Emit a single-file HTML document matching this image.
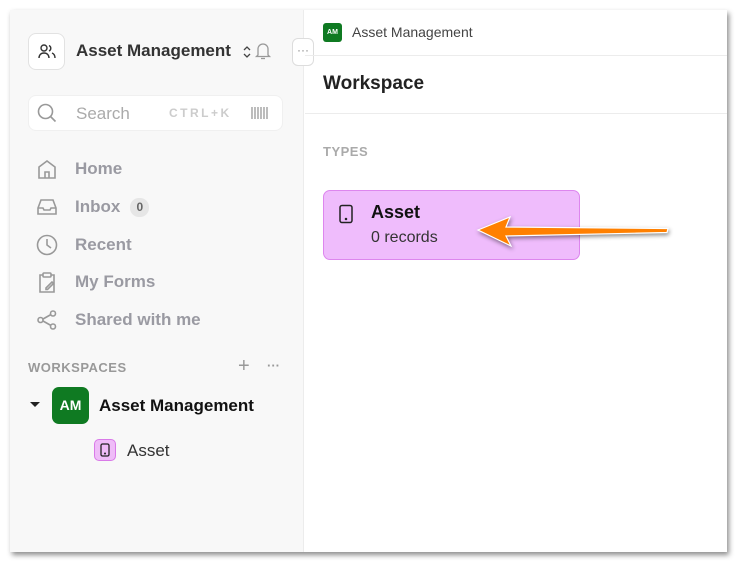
<!DOCTYPE html>
<html><head><meta charset="utf-8"><style>
*{box-sizing:border-box;margin:0;padding:0}
body{width:738px;height:564px;background:#fff;font-family:"Liberation Sans",sans-serif;position:relative;overflow:hidden}
.frame{position:absolute;left:10px;top:10px;width:717px;height:542px;background:#fff;box-shadow:2px 3px 5px rgba(0,0,0,.45);overflow:hidden}
.side{position:absolute;left:0;top:0;width:294px;height:100%;background:#f8f8f8;border-right:1px solid #ececec}
.abs{position:absolute}
.nav{position:absolute;left:26px;display:flex;align-items:center;font-size:17px;font-weight:bold;color:#9a9aa2}
.nav svg{width:22px;height:22px;margin-right:17px}
</style></head><body>
<div class="frame">
<div class="side">
  <div class="abs" style="left:18px;top:23px;width:37px;height:37px;border:1px solid #e2e2e2;border-radius:8px;background:#fff"></div>
  <svg class="abs" style="left:27px;top:32px" width="20" height="20" viewBox="0 0 20 20" fill="none" stroke="#333" stroke-width="1.4"><circle cx="7" cy="6" r="3"/><path d="M2 16c0-3 2-5 5-5s5 2 5 5"/><path d="M12 3.5a3 3 0 0 1 0 5.5M15 11c2 .8 3 2.5 3 5"/></svg>
  <div class="abs" style="left:66px;top:31px;font-size:17px;font-weight:bold;color:#333">Asset Management</div>
  <svg class="abs" style="left:232px;top:35px" width="10" height="14" viewBox="0 0 10 14" fill="none" stroke="#444" stroke-width="1.3"><path d="M2 5l3-3 3 3M2 9l3 3 3-3"/></svg>
  <svg class="abs" style="left:244px;top:31px" width="18" height="20" viewBox="0 0 18 20" fill="none" stroke="#999" stroke-width="1.3"><path d="M4 14V8a5 5 0 0 1 10 0v6l1.5 1.5h-13z"/><path d="M7 17.5h4"/></svg>
  <div class="abs" style="left:282px;top:28px;width:22px;height:28px;border:1px solid #ddd;border-radius:6px;background:#fff;font-size:12px;color:#888;text-align:center;line-height:22px">···</div>
  <div class="abs" style="left:18px;top:85px;width:255px;height:36px;background:#fff;border-radius:8px;border:1px solid #f0f0f0"></div>
  <svg class="abs" style="left:26px;top:92px" width="22" height="22" viewBox="0 0 22 22" fill="none" stroke="#999" stroke-width="1.6"><circle cx="9.5" cy="9.5" r="7"/><path d="M14.5 14.5l5 5"/></svg>
  <div class="abs" style="left:66px;top:94px;font-size:17px;color:#aaa">Search</div>
  <div class="abs" style="left:159px;top:96px;font-size:12px;font-weight:bold;color:#ccc;letter-spacing:2.5px">CTRL+K</div>
  <svg class="abs" style="left:240px;top:96px" width="18" height="14" viewBox="0 0 18 14" stroke="#999" stroke-width="1.3"><path d="M2 1v12M5 1v12M8 1v12M11 1v12M14 1v12M17 1v12"/></svg>
  <div class="nav" style="top:148px"><svg viewBox="0 0 22 22" fill="none" stroke="#999" stroke-width="1.6"><path d="M3 20V9l8-6 8 6v11z"/><path d="M9 20v-6h4v6"/></svg>Home</div>
  <div class="nav" style="top:186px"><svg viewBox="0 0 22 22" fill="none" stroke="#999" stroke-width="1.6"><path d="M2 12l3-8h12l3 8v6H2z"/><path d="M2 12h5l1 2h6l1-2h5"/></svg>Inbox<span style="margin-left:10px;background:#e6e6e6;border-radius:9px;width:19px;height:19px;font-size:12px;color:#666;display:inline-flex;align-items:center;justify-content:center">0</span></div>
  <div class="nav" style="top:224px"><svg viewBox="0 0 22 22" fill="none" stroke="#999" stroke-width="1.6"><circle cx="11" cy="11" r="9.5"/><path d="M11 5v6l4 3"/></svg>Recent</div>
  <div class="nav" style="top:261px"><svg viewBox="0 0 22 22" fill="none" stroke="#999" stroke-width="1.6"><path d="M7 4H4v17h14V4h-3"/><rect x="7" y="2" width="8" height="4" rx="1"/><path d="M10 17l6-6 1.5 1.5-6 6H10z"/></svg>My Forms</div>
  <div class="nav" style="top:299px"><svg viewBox="0 0 22 22" fill="none" stroke="#999" stroke-width="1.6"><circle cx="17" cy="4.5" r="2.5"/><circle cx="4.5" cy="11" r="2.5"/><circle cx="17" cy="17.5" r="2.5"/><path d="M7 10l8-4.5M7 12l8 4.5"/></svg>Shared with me</div>
  <div class="abs" style="left:18px;top:350px;font-size:13px;font-weight:bold;color:#999;letter-spacing:.5px">WORKSPACES</div>
  <div class="abs" style="left:228px;top:345px;font-size:20px;color:#999">+</div>
  <div class="abs" style="left:257px;top:348px;font-size:13px;color:#999;font-weight:bold">···</div>
  <div class="abs" style="left:20px;top:392px;width:0;height:0;border-left:5px solid transparent;border-right:5px solid transparent;border-top:5px solid #222"></div>
  <div class="abs" style="left:42px;top:377px;width:37px;height:37px;background:#0f7a22;border-radius:7px;color:#fff;font-size:14px;font-weight:bold;text-align:center;line-height:37px">AM</div>
  <div class="abs" style="left:89px;top:386px;font-size:17px;font-weight:bold;color:#111">Asset Management</div>
  <div class="abs" style="left:84px;top:429px;width:22px;height:22px;background:#efbcf8;border:1px solid #d97ae8;border-radius:5px"></div>
  <svg class="abs" style="left:89px;top:433px" width="12" height="14" viewBox="0 0 12 14" fill="none" stroke="#222" stroke-width="1.3"><rect x="2" y="1" width="8" height="12" rx="1.5"/><circle cx="6" cy="10.5" r=".4" fill="#222"/></svg>
  <div class="abs" style="left:117px;top:431px;font-size:17px;color:#333">Asset</div>
</div>
<div class="abs" style="left:313px;top:13px;width:19px;height:19px;background:#0f7a22;border-radius:3px;color:#fff;font-size:7px;font-weight:bold;text-align:center;line-height:19px">AM</div>
<div class="abs" style="left:342px;top:14px;font-size:14px;color:#444">Asset Management</div>
<div class="abs" style="left:295px;top:45px;width:422px;border-top:1px solid #ececec"></div>
<div class="abs" style="left:313px;top:63px;font-size:19px;font-weight:bold;color:#222">Workspace</div>
<div class="abs" style="left:295px;top:103px;width:422px;border-top:1px solid #ececec"></div>
<div class="abs" style="left:313px;top:134px;font-size:13px;font-weight:bold;color:#aaa;letter-spacing:.5px">TYPES</div>
<div class="abs" style="left:313px;top:180px;width:257px;height:70px;background:#efbcfc;border:1px solid #dd86ee;border-radius:7px"></div>
<svg class="abs" style="left:328px;top:194px" width="16" height="20" viewBox="0 0 16 20" fill="none" stroke="#222" stroke-width="1.5"><rect x="2" y="1.5" width="12" height="17" rx="2"/><circle cx="8" cy="15" r=".5" fill="#222"/></svg>
<div class="abs" style="left:361px;top:192px;font-size:18px;font-weight:bold;color:#111">Asset</div>
<div class="abs" style="left:361px;top:219px;font-size:16px;color:#333">0 records</div>
<svg class="abs" style="left:460px;top:205px;filter:drop-shadow(1px 2px 2px rgba(0,0,0,.45))" width="210" height="40" viewBox="0 0 210 40"><path d="M8 15L40 2l-4 10 162 1.5-1 4L36 21l5 10z" fill="#ff8000" stroke="#fff" stroke-width="1.2"/></svg>
</div>
</body></html>
